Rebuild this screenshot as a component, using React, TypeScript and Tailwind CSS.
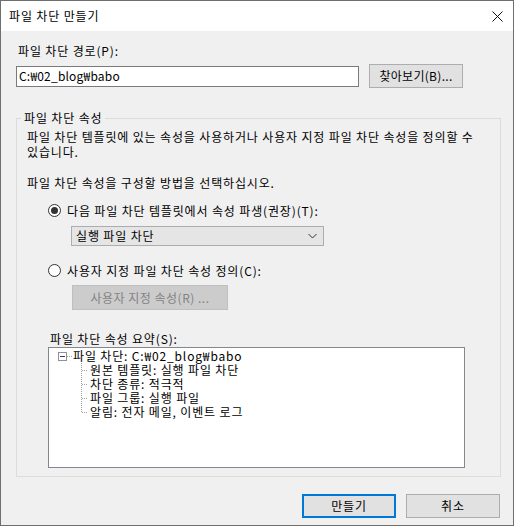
import type { ReactNode } from "react";

const font = { fontFamily: '"Noto Sans CJK KR", "Noto Sans", sans-serif' };

function Radio({ checked, children }: { checked?: boolean; children: ReactNode }) {
  return (
    <div className="flex h-[15px] items-center">
      <span className="flex h-[13px] w-[13px] items-center justify-center rounded-full border border-[#333333] bg-white">
        {checked && <span className="h-[7px] w-[7px] rounded-full bg-[#333333]" />}
      </span>
      <span className="ml-[6px] leading-[15px]">{children}</span>
    </div>
  );
}

function TreeChild({ last, children }: { last?: boolean; children: ReactNode }) {
  return (
    <div className="flex h-[14px] items-center pl-[27px]">
      <svg width="12" height="14" className="shrink-0">
        <line x1="5.5" y1="0" x2="5.5" y2={last ? 7 : 14} stroke="#a0a0a0" strokeDasharray="1 1" />
        <line x1="6" y1="7.5" x2="12" y2="7.5" stroke="#a0a0a0" strokeDasharray="1 1" />
      </svg>
      <span className="ml-[2px] leading-[14px]">{children}</span>
    </div>
  );
}

export default function App() {
  return (
    <div
      className="flex h-[526px] w-[514px] flex-col border border-[#6f6f6f] bg-[#f0f0f0] text-[12px] tracking-[0.85px] text-black"
      style={font}
    >
      {/* title bar */}
      <div className="flex h-[30px] shrink-0 items-center justify-between bg-white pl-[8px] pr-[10px]">
        <span className="leading-[16px]">파일 차단 만들기</span>
        <svg width="11" height="11" viewBox="0 0 11 11">
          <path d="M0.5 0.5 L10.5 10.5 M10.5 0.5 L0.5 10.5" stroke="#111" strokeWidth="1" />
        </svg>
      </div>

      <div className="flex flex-1 flex-col pl-[15px] pr-[12px] pt-[12px]">
        <div className="pl-[2px] leading-[16px]">파일 차단 경로(P):</div>
        <div className="mt-[5px] flex items-center">
          <div className="flex h-[21px] w-[343px] items-center border border-[#7a7a7a] bg-white pl-[2px] leading-[16px] tracking-[0.2px]">
            C:₩02_blog₩babo
          </div>
          <button className="ml-[10px] h-[24px] w-[94px] border border-[#adadad] bg-[#e1e1e1] leading-[16px] tracking-[0.3px]">
            찾아보기(B)...
          </button>
        </div>

        {/* group box */}
        <div className="relative mt-[30px] h-[359px] w-[485px] border border-[#dcdcdc] pb-[8px] pl-[10px] pt-[10px]">
          <span className="absolute -top-[9px] left-[4px] bg-[#f0f0f0] px-[3px] leading-[16px]">파일 차단 속성</span>
          <p className="leading-[15px]">
            파일 차단 템플릿에 있는 속성을 사용하거나 사용자 지정 파일 차단 속성을 정의할 수
            <br />
            있습니다.
          </p>
          <p className="mt-[16px] leading-[16px]">파일 차단 속성을 구성할 방법을 선택하십시오.</p>

          <div className="ml-[21px] mt-[12px]">
            <Radio checked>다음 파일 차단 템플릿에서 속성 파생(권장)(T):</Radio>
          </div>
          <div className="ml-[44px] mt-[8px] flex h-[20px] w-[253px] items-center justify-between border border-[#adadad] bg-[#e5e5e5] pl-[4px] pr-[6px]">
            <span className="leading-[16px]">실행 파일 차단</span>
            <svg width="9" height="6" viewBox="0 0 9 6">
              <path d="M0.5 1 L4.5 5 L8.5 1" fill="none" stroke="#333" strokeWidth="1" />
            </svg>
          </div>

          <div className="ml-[21px] mt-[17px]">
            <Radio>사용자 지정 파일 차단 속성 정의(C):</Radio>
          </div>
          <button
            disabled
            className="ml-[45px] mt-[7px] h-[25px] w-[156px] border border-[#bfbfbf] bg-[#cccccc] leading-[16px] tracking-[0.5px] text-[#838383]"
          >
            사용자 지정 속성(R) ...
          </button>

          <div className="ml-[23px] mt-[21px] leading-[16px]">파일 차단 속성 요약(S):</div>
          <div className="ml-[21px] h-[121px] w-[417px] border border-[#828790] bg-white pt-[1px]">
            <div className="flex h-[14px] items-center pl-[9px]">
              <span className="flex h-[9px] w-[9px] shrink-0 items-center justify-center border border-[#919191] bg-white">
                <span className="h-[1px] w-[5px] bg-[#1c3f94]" />
              </span>
              <svg width="5" height="14" className="shrink-0">
                <line x1="0" y1="7.5" x2="5" y2="7.5" stroke="#a0a0a0" strokeDasharray="1 1" />
              </svg>
              <span className="ml-[1px] leading-[14px]">파일 차단: C:₩02_blog₩babo</span>
            </div>
            <TreeChild>원본 템플릿: 실행 파일 차단</TreeChild>
            <TreeChild>차단 종류: 적극적</TreeChild>
            <TreeChild>파일 그룹: 실행 파일</TreeChild>
            <TreeChild last>알림: 전자 메일, 이벤트 로그</TreeChild>
          </div>
        </div>

        <div className="mt-[17px] flex justify-end gap-[10px] pr-[1px]">
          <button className="h-[24px] w-[94px] border-2 border-[#0078d7] bg-[#e1e1e1] leading-[16px]">만들기</button>
          <button className="h-[24px] w-[94px] border border-[#adadad] bg-[#e1e1e1] leading-[16px]">취소</button>
        </div>
      </div>
    </div>
  );
}
